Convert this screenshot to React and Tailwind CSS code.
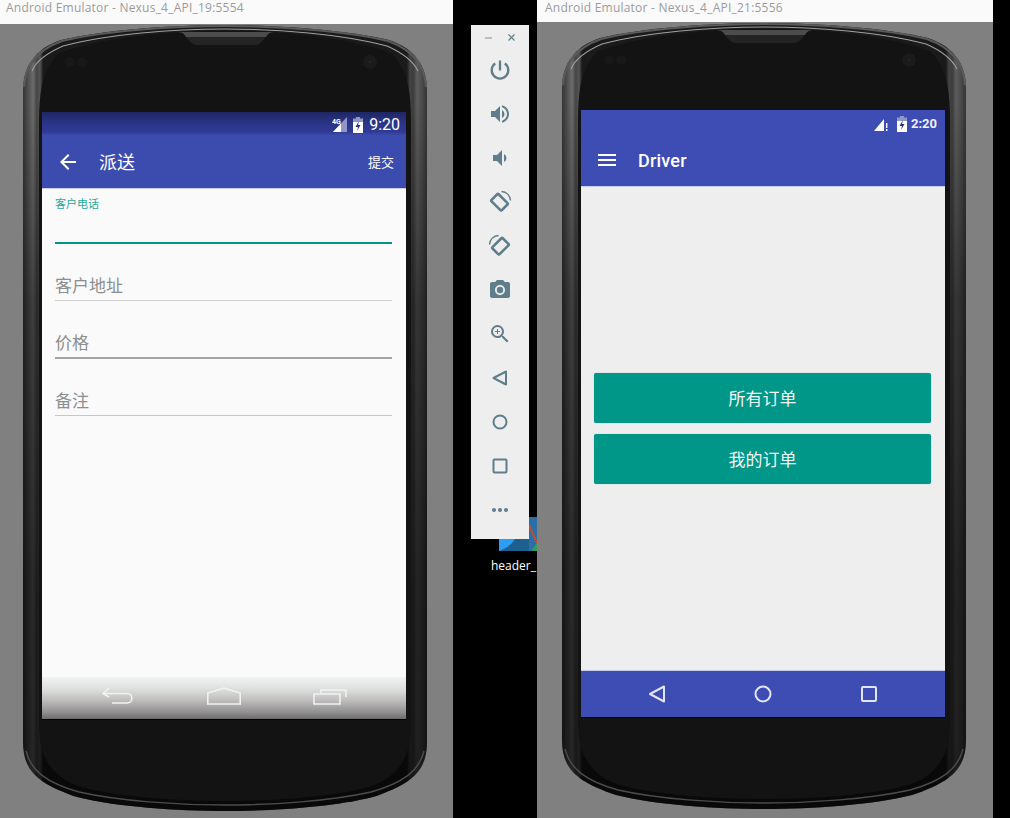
import { MdArrowBack, MdMenu, MdVolumeUp, MdVolumeDown, MdPhotoCamera, MdZoomIn, MdMoreHoriz } from 'react-icons/md';

const cjk = "font-['Noto_Sans_CJK_SC',sans-serif]";

const TitleBar = ({ text, height }) => (
  <div className={`${height} shrink-0 bg-[#fafafa] pl-[6px] text-[12px] leading-[15px] tracking-[0.22px] text-[#9a9a9e] font-['Open_Sans',sans-serif]`}>
    {text}
  </div>
);

const outline =
  'M0 66C0 40 12 24 38 15C80 5 150 0 202 0C254 0 324 5 366 15C392 24 404 40 404 66V716C404 744 392 758 350 772C310 782 250 786 202 786C154 786 94 782 54 772C12 758 0 744 0 716Z';

// the device body, everything but the screen
const PhoneBody = ({ id }) => (
  <svg viewBox="0 0 404 786" className="absolute inset-0 w-[404px] h-[786px]">
    <defs>
      <linearGradient id={`${id}-side`} x1="0" x2="1" y1="0" y2="0">
        <stop offset="0" stopColor="#343434" />
        <stop offset="0.012" stopColor="#4e4e4e" />
        <stop offset="0.025" stopColor="#6c6c6c" />
        <stop offset="0.034" stopColor="#454545" />
        <stop offset="0.042" stopColor="#555" />
        <stop offset="0.05" stopColor="#1a1a1a" />
        <stop offset="0.95" stopColor="#1a1a1a" />
        <stop offset="0.958" stopColor="#444" />
        <stop offset="0.966" stopColor="#3c3c3c" />
        <stop offset="0.975" stopColor="#5c5c5c" />
        <stop offset="0.988" stopColor="#4a4a4a" />
        <stop offset="1" stopColor="#343434" />
      </linearGradient>
      <linearGradient id={`${id}-fade`} x1="0" x2="0" y1="0" y2="1">
        <stop offset="0.1" stopColor="#000" stopOpacity="0" />
        <stop offset="0.35" stopColor="#000" stopOpacity="0.4" />
        <stop offset="0.7" stopColor="#000" stopOpacity="0.6" />
        <stop offset="0.95" stopColor="#000" stopOpacity="0.65" />
      </linearGradient>
    </defs>
    <path d={outline} fill={`url(#${id}-side)`} />
    <path d={outline} fill={`url(#${id}-fade)`} />
    <path
      d="M16 100C16 70 18 46 36 28C85 11 150 6 202 6C254 6 319 11 368 28C386 46 388 70 388 100V700C388 732 376 752 346 762C310 772 250 776 202 776C154 776 94 772 58 762C28 752 16 732 16 700Z"
      fill="#131313"
    />
    <path d="M1 62C2 40 14 25 39 16C80 6 150 1 202 1C254 1 324 6 365 16C390 25 402 40 403 62" fill="none" stroke="#5a5a5a" strokeWidth="2" />
    <path d="M9 46C13 36 24 28 40 21C85 9 150 4 202 4C254 4 319 9 364 21C380 28 390 36 395 46" fill="none" stroke="#a0a0a0" strokeWidth="1.100" />
    <path d="M3 726C8 746 24 758 56 767C96 776 154 780 202 780C250 780 308 776 348 767C380 758 396 746 401 726" fill="none" stroke="#4c4c4c" strokeWidth="1.500" />
    <path d="M155 7C164 7 165 20 174 20H232C241 20 242 7 251 7Z" fill="#242424" />
    <path d="M155 7C160 7 162 10 163 12H243C244 10 246 7 251 7Z" fill="#4c4c4c" />
    <circle cx="47" cy="37" r="5" fill="#181818" />
    <circle cx="59" cy="37" r="5" fill="#181818" />
    <circle cx="347" cy="37" r="7" fill="#1b1b1b" />
    <circle cx="347" cy="37" r="1" fill="#1c2a55" />
  </svg>
);

const Phone = ({ id, children }) => (
  <div className="relative w-[404px] h-[786px] pl-[19px] pt-[87px]">
    <PhoneBody id={id} />
    <div className="relative flex flex-col w-[364px] h-[607px] shadow-[0_1px_0_#000]">{children}</div>
  </div>
);

const Field = ({ label, line }) => (
  <div className="mt-[30px]">
    <div className="text-[17px] leading-[22px] text-[#8b8f90]">{label}</div>
    <div className={`mt-[4px] ${line}`} />
  </div>
);

const PowerIcon = () => (
  <svg viewBox="0 0 24 24" className="w-[24px] h-[24px]" fill="none" stroke="#607d8b" strokeWidth="2.300">
    <path d="M12 2.500V12.500" />
    <path d="M7.200 5.500A8.300 8.300 0 1 0 16.800 5.500" />
  </svg>
);

const RotateIcon = ({ flip }) => (
  <svg viewBox="0 0 24 24" className={`w-[24px] h-[24px] ${flip ? '-scale-x-100' : ''}`} fill="none" stroke="#607d8b" strokeWidth="2.600">
    <rect x="6.500" y="5" width="10" height="14.500" rx="1" transform="rotate(-45 11.500 12.200)" />
    <path d="M13.500 1.500C18.500 1.800 22 5.500 22.500 10.500" strokeWidth="1.500" />
  </svg>
);

const ToolIcon = ({ children }) => (
  <div className="h-[44px] flex items-center justify-center text-[#607d8b]">{children}</div>
);

const Toolbar = () => (
  <div className="relative ml-[18px] mt-[25px] w-[58px] h-[514px] bg-[#eeeeee]">
    <div className="h-[23px] flex items-start justify-between pt-[8px] px-[13px]">
      <svg viewBox="0 0 9 9" className="w-[9px] h-[9px]"><path d="M1 5H8" stroke="#9fb0b8" strokeWidth="1.500" /></svg>
      <svg viewBox="0 0 9 9" className="w-[9px] h-[9px]"><path d="M1.500 1.500L7.500 7.500M7.500 1.500L1.500 7.500" stroke="#607d8b" strokeWidth="1.100" /></svg>
    </div>
    <ToolIcon><PowerIcon /></ToolIcon>
    <ToolIcon><MdVolumeUp size={24} /></ToolIcon>
    <ToolIcon><MdVolumeDown size={24} /></ToolIcon>
    <ToolIcon><RotateIcon /></ToolIcon>
    <ToolIcon><RotateIcon flip /></ToolIcon>
    <ToolIcon><MdPhotoCamera size={24} /></ToolIcon>
    <ToolIcon><MdZoomIn size={24} /></ToolIcon>
    <ToolIcon>
      <svg viewBox="0 0 20 20" className="w-[20px] h-[20px]" fill="none" stroke="#607d8b" strokeWidth="2"><path d="M16 3.500V16.500L3.500 10Z" strokeLinejoin="round" /></svg>
    </ToolIcon>
    <ToolIcon>
      <svg viewBox="0 0 20 20" className="w-[20px] h-[20px]" fill="none" stroke="#607d8b" strokeWidth="2"><circle cx="10" cy="10" r="6.500" /></svg>
    </ToolIcon>
    <ToolIcon>
      <svg viewBox="0 0 20 20" className="w-[20px] h-[20px]" fill="none" stroke="#607d8b" strokeWidth="2"><rect x="3.500" y="3.500" width="13" height="13" rx="1" /></svg>
    </ToolIcon>
    <ToolIcon><MdMoreHoriz size={24} /></ToolIcon>
  </div>
);

const DesktopIcon = () => (
  <div className="absolute left-[38px] top-[517px] w-[46px] flex flex-col">
    <svg viewBox="0 0 38 34" className="ml-[8px] w-[38px] h-[34px]">
      <rect width="38" height="34" fill="#1d5f8e" />
      <path d="M0 34V22H16C12 28 8 31 0 34Z" fill="#2b9df2" />
      <path d="M30 0H38V34H30Z" fill="#2a6fa8" />
      <path d="M30 8L38 26" stroke="#c8492d" strokeWidth="2" />
      <path d="M32 34L38 26V34Z" fill="#2f9e58" />
    </svg>
    <div className="mt-[7px] text-[12px] leading-[16px] text-white font-['Open_Sans',sans-serif] whitespace-nowrap">header_</div>
  </div>
);

const Signal4G = () => (
  <svg viewBox="0 0 16 15" className="w-[16px] h-[15px]">
    <path d="M15 0V15H1Z" fill="#8f96c9" />
    <path d="M9 6.500V15H1Z" fill="#fff" />
    <text x="0" y="6.500" fontSize="7" fontWeight="700" fill="#fff" fontFamily="Roboto, sans-serif">4G</text>
  </svg>
);

const Battery = () => (
  <svg viewBox="0 0 12 16" className="w-[12px] h-[16px]">
    <path d="M4 0H8V1.500H11V16H1V1.500H4Z" fill="#8f96c9" />
    <path d="M1 5H11V16H1Z" fill="#fff" />
    <path d="M7 4L3.500 10H6L5 14L8.500 8H6Z" fill="#26307a" />
  </svg>
);

const FormScreen = () => (
  <>
    <div className="h-[23px] shrink-0 flex items-center justify-end gap-[4px] pr-[6px] pt-[2px] bg-[linear-gradient(#1f2663,#2a3485_45%,#2f3a93_85%,#3a4aa8)]">
      <Signal4G />
      <Battery />
      <span className="ml-[1px] text-[16px] leading-[20px] text-white font-['Roboto',sans-serif]">9:20</span>
    </div>
    <div className="h-[53px] shrink-0 flex items-center pl-[14px] pr-[12px] bg-[#3c4cae] text-white">
      <MdArrowBack size={24} />
      <span className={`ml-[19px] text-[18px] ${cjk}`}>派送</span>
      <span className={`ml-auto text-[13px] ${cjk}`}>提交</span>
    </div>
    <div className={`flex-1 flex flex-col bg-[#fafafa] border-t border-[#c7cdf0] pl-[13px] pr-[14px] ${cjk}`}>
      <div className="pt-[7px] text-[11px] leading-[14px] text-[#2aa899]">客户电话</div>
      <div className="mt-[32px] h-[2px] bg-[#009688]" />
      <Field label="客户地址" line="h-px bg-[#cfcfcf]" />
      <Field label="价格" line="h-[2px] bg-[#a3a3a3]" />
      <Field label="备注" line="h-px bg-[#c4c6d6]" />
    </div>
    <div className="h-[42px] shrink-0 flex items-start justify-center gap-[72px] pt-[10px] bg-[linear-gradient(#f3f3f3,#dcdede_30%,#c0bebd_55%,#8f8e8e_85%,#6c6c6c)]">
      <svg viewBox="0 0 34 18" className="w-[34px] h-[18px]" fill="none" stroke="#f2f2f2" strokeWidth="1.600">
        <path d="M8 1L2 6.500L8 10M2 6.500H26C32.500 6.500 32.500 16 26 16H11" />
      </svg>
      <svg viewBox="0 0 34 18" className="w-[34px] h-[18px]" fill="none" stroke="#f2f2f2" strokeWidth="1.600">
        <path d="M0.800 6L17 1L33.200 6V17H0.800Z" />
      </svg>
      <svg viewBox="0 0 34 18" className="w-[34px] h-[18px]" fill="none" stroke="#f2f2f2" strokeWidth="1.600">
        <path d="M1 7H27V17H1ZM8 7V3H33V10" />
      </svg>
    </div>
  </>
);

const MenuScreen = () => (
  <>
    <div className="h-[24px] shrink-0 flex items-center justify-end pr-[8px] pt-[4px] bg-[#3d4db3]">
      <svg viewBox="0 0 14 13" className="w-[14px] h-[13px]">
        <path d="M10 1V13H0Z" fill="#fff" />
        <path d="M12 5H13.400V10H12ZM12 11H13.400V13H12Z" fill="#fff" />
      </svg>
      <div className="ml-[8px]"><Battery /></div>
      <span className="ml-[3px] text-[13px] leading-[18px] font-bold text-[#f0f1fa] font-['Roboto',sans-serif]">2:20</span>
    </div>
    <div className="h-[52px] shrink-0 flex items-center pl-[14px] bg-[#3d4db3] text-white">
      <MdMenu size={24} />
      <span className="ml-[19px] text-[18px] tracking-[0.2px] font-medium font-['Roboto',sans-serif]">Driver</span>
    </div>
    <div className={`flex-1 flex flex-col justify-center gap-[11px] pl-[13px] pr-[14px] bg-[#eeeeee] border-t border-b border-t-[#c9cfee] border-b-[#c5cbe6] ${cjk}`}>
      <button className="h-[50px] rounded-[2px] bg-[#009688] text-[17px] text-[#f2f8f7] shadow-[0_0_1px_#7fb9b2]">所有订单</button>
      <button className="h-[50px] rounded-[2px] bg-[#009688] text-[17px] text-[#f2f8f7] shadow-[0_0_1px_#7fb9b2]">我的订单</button>
    </div>
    <div className="h-[46px] shrink-0 flex items-center justify-center gap-[86px] bg-[#3d4db3] pr-[1px]">
      <svg viewBox="0 0 20 20" className="w-[20px] h-[20px]" fill="none" stroke="#e3e6f5" strokeWidth="2"><path d="M17 2.500V17.500L3 10Z" strokeLinejoin="round" /></svg>
      <svg viewBox="0 0 20 20" className="w-[20px] h-[20px]" fill="none" stroke="#e3e6f5" strokeWidth="2"><circle cx="10" cy="10" r="7.500" /></svg>
      <svg viewBox="0 0 20 20" className="w-[20px] h-[20px]" fill="none" stroke="#e3e6f5" strokeWidth="2"><rect x="3" y="3" width="14" height="14" rx="1" /></svg>
    </div>
  </>
);

export default function App() {
  return (
    <div className="w-[1010px] h-[818px] flex bg-black overflow-hidden">
      <div className="w-[453px] flex flex-col bg-[#808080]">
        <TitleBar text="Android Emulator - Nexus_4_API_19:5554" height="h-[24px]" />
        <div className="ml-[23px] mt-[1px]">
          <Phone id="left"><FormScreen /></Phone>
        </div>
      </div>
      <div className="relative w-[84px]">
        <DesktopIcon />
        <Toolbar />
      </div>
      <div className="w-[456px] flex flex-col bg-[#808080]">
        <TitleBar text="Android Emulator - Nexus_4_API_21:5556" height="h-[22px] pl-[8px]" />
        <div className="ml-[25px] mt-[1px]">
          <Phone id="right"><MenuScreen /></Phone>
        </div>
      </div>
    </div>
  );
}
